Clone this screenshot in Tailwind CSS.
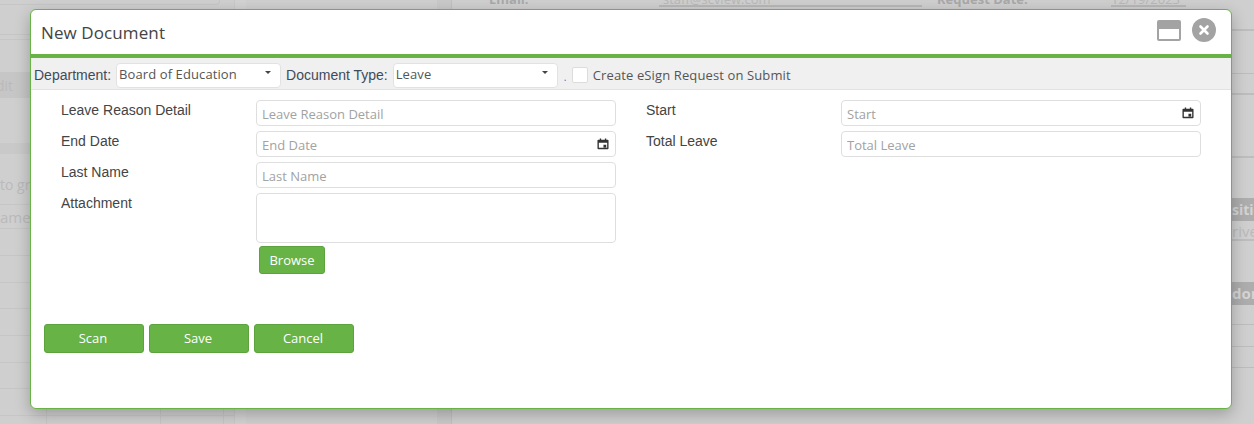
<!DOCTYPE html>
<html lang="en">
<head>
<meta charset="utf-8">
<title>New Document</title>
<script src="https://cdn.jsdelivr.net/npm/@tailwindcss/browser@4"></script>
</head>
<body class="bg-[#cfcfcf] font-['Open_Sans',sans-serif]">
<div class="relative w-[1254px] h-[424px] overflow-hidden">
  <!-- dimmed page behind the dialog -->
  <div class="flex h-full text-[#bababa]">
    <div class="w-[235px] shrink-0 flex flex-col text-[14px] border-r border-[#c8c8c8]">
      <div class="w-[220px] h-[5px] border-b border-r border-[#c6c6c6] rounded-br-[4px]"></div>
      <div class="h-[30px] border-b border-[#c6c6c6]"></div>
      <div class="h-[5px] border-b border-[#c6c6c6]"></div>
      <div class="mt-[32px] h-[26px] bg-[#c6c6c6] leading-[26px] overflow-hidden"><span class="block ml-[-4px] mt-[1px]">dit</span></div>
      <div class="mt-[45px] h-[11px] bg-[#c9c9c9]"></div>
      <div class="mt-[21px] h-[30px] border-b border-[#c6c6c6] leading-[20px] whitespace-nowrap">to gro</div>
      <div class="h-[24px] border-b border-[#c6c6c6] leading-[24px] text-[15px]">ame</div>
      <div class="h-[27px] border-b border-[#c6c6c6]"></div>
      <div class="h-[27px] border-b border-[#c6c6c6]"></div>
      <div class="h-[26px] border-b border-[#c6c6c6]"></div>
      <div class="h-[27px] border-b border-[#c6c6c6]"></div>
      <div class="h-[27px] border-b border-[#c6c6c6]"></div>
      <div class="h-[26px] border-b border-[#c6c6c6]"></div>
      <div class="h-[27px] flex border-b border-[#c6c6c6]">
        <div class="w-[47px] border-r border-[#c6c6c6]"></div>
        <div class="w-[114px] border-r border-[#c6c6c6]"></div>
        <div class="w-[63px] border-r border-[#c6c6c6]"></div>
      </div>
      <div class="flex-1 flex">
        <div class="w-[47px] border-r border-[#c6c6c6]"></div>
        <div class="w-[114px] border-r border-[#c6c6c6]"></div>
        <div class="w-[63px] border-r border-[#c6c6c6]"></div>
      </div>
    </div>
    <div class="flex-1 flex">
      <div class="w-[11px] bg-[#d2d2d2]"></div>
      <div class="w-[206px] flex justify-end border-r border-[#c0c0c0]">
        <div class="w-[14px] bg-[#c9c9c9]"></div>
      </div>
      <div class="flex pl-[37px] mt-[-8px] h-[15px] text-[13px] leading-[14px] text-[#a9a9a9] whitespace-nowrap">
        <span class="w-[170px] font-bold">Email:</span>
        <span class="w-[263px] h-[15px] border-b-2 border-[#b8b8b8] pl-[4px] mr-[15px] text-[#b8b8b8]">staff@scview.com</span>
        <span class="w-[174px] font-bold">Request Date:</span>
        <span class="w-[75px] h-[15px] border-b-2 border-[#b8b8b8] text-[#b8b8b8]">12/19/2023</span>
      </div>
    </div>
    <div class="w-[22px] shrink-0 flex flex-col text-[14px] font-bold whitespace-nowrap overflow-hidden">
      <div class="h-[31px] border-b-2 border-[#bdbdbd]"></div>
      <div class="h-[43px] border-b border-[#bdbdbd]"></div>
      <div class="h-[21px] border-b-2 border-[#bdbdbd]"></div>
      <div class="h-[63px] border-b-2 border-[#bdbdbd]"></div>
      <div class="mt-[40px] h-[23px] bg-[#adadad] text-[#d4d4d4] leading-[23px]">sitic</div>
      <div class="h-[20px] border-b-2 border-[#bdbdbd] font-normal text-[15px] text-[#bababa] leading-[20px]">rive</div>
      <div class="mt-[41px] h-[23px] bg-[#adadad] text-[#d4d4d4] leading-[23px] text-[15px]">dor</div>
      <div class="mt-[19px] h-px bg-[#bdbdbd]"></div>
      <div class="mt-[21px] h-px bg-[#bdbdbd]"></div>
      <div class="mt-[20px] h-px bg-[#bdbdbd]"></div>
    </div>
  </div>

  <!-- dialog -->
  <div class="absolute left-[30px] top-[9px] w-[1202px] h-[400px] bg-white border border-[#67b346] rounded-[6px] shadow-[0_5px_15px_rgba(0,0,0,0.25)] flex flex-col overflow-hidden">
    <div class="h-[44px] shrink-0 flex items-center justify-between pl-[10px] pr-[15px]">
      <span class="text-[17px] text-[#444] tracking-[0.1px] mt-[2px]">New Document</span>
      <div class="flex items-center gap-[11px] mb-[4px]">
        <svg width="24" height="21" viewBox="0 0 24 21" aria-hidden="true">
          <rect x="0" y="0" width="24" height="21" rx="2" fill="#a3a3a3"/>
          <rect x="2" y="9" width="20" height="10" fill="#fff"/>
        </svg>
        <svg width="24" height="24" viewBox="0 0 24 24" aria-hidden="true">
          <circle cx="12" cy="12" r="12" fill="#a3a3a3"/>
          <path d="M8.500 8.500 15.500 15.500M15.500 8.500 8.500 15.500" stroke="#fff" stroke-width="2.600" stroke-linecap="round"/>
        </svg>
      </div>
    </div>
    <div class="h-[4px] shrink-0 bg-[#67b346]"></div>

    <div class="h-[32px] shrink-0 bg-[#f0f0f0] border-b border-[#e2e2e2] flex items-center pl-[3px] pb-[1px] whitespace-nowrap">
      <span class="font-['Liberation_Sans',sans-serif] text-[14px] text-[#3f4a5a] mt-[4px] mr-[5px]">Department:</span>
      <div class="relative w-[165px] h-[25px]">
        <select class="appearance-none w-full h-full bg-white border border-[#e2e2e2] rounded-[4px] pl-[2px] text-[13px] tracking-[0.1px] text-[#555] outline-none pb-[2px]">
          <option>Board of Education</option>
        </select>
        <svg class="absolute right-[10px] top-[10px]" width="6" height="3" viewBox="0 0 6 3" aria-hidden="true"><path d="M0 0h6L3 3z" fill="#444"/></svg>
      </div>
      <span class="font-['Liberation_Sans',sans-serif] text-[14px] text-[#3f4a5a] mt-[4px] ml-[5px] mr-[5px]">Document Type:</span>
      <div class="relative w-[165px] h-[25px]">
        <select class="appearance-none w-full h-full bg-white border border-[#e2e2e2] rounded-[4px] pl-[2px] text-[13px] tracking-[0.1px] text-[#555] outline-none pb-[2px]">
          <option>Leave</option>
        </select>
        <svg class="absolute right-[10px] top-[10px]" width="6" height="3" viewBox="0 0 6 3" aria-hidden="true"><path d="M0 0h6L3 3z" fill="#444"/></svg>
      </div>
      <span class="text-[10px] text-[#3b6fd4] ml-[6px] mt-[8px] w-[8px]">.</span>
      <span class="w-[16px] h-[16px] bg-white border border-[#dcdcdc] rounded-[2px] mr-[5px] mt-[4px]"></span>
      <span class="text-[13px] text-[#555] tracking-[0.12px] mt-[5px]">Create eSign Request on Submit</span>
    </div>

    <div class="flex-1 flex flex-col pl-[13px]">
      <div class="flex pt-[10px] pl-[17px]">
        <div class="w-[585px] shrink-0 flex flex-col gap-[5px]">
          <div class="flex h-[26px]">
            <label class="w-[195px] font-['Liberation_Sans',sans-serif] text-[14px] text-[#444] leading-[20px]">Leave Reason Detail</label>
            <input placeholder="Leave Reason Detail" class="w-[360px] h-[26px] border border-[#dedede] rounded-[4px] px-[5px] pt-[2px] text-[13px] placeholder:text-[#a2a2a2] outline-none">
          </div>
          <div class="flex h-[26px]">
            <label class="w-[195px] font-['Liberation_Sans',sans-serif] text-[14px] text-[#444] leading-[20px]">End Date</label>
            <div class="relative w-[360px] h-[26px]">
              <input placeholder="End Date" class="w-full h-full border border-[#dedede] rounded-[4px] px-[5px] pt-[2px] text-[13px] placeholder:text-[#a2a2a2] outline-none">
              <svg class="absolute right-[7px] top-[7px]" width="12" height="12" viewBox="0 0 13 14" preserveAspectRatio="none" aria-hidden="true"><path d="M1.500 2H3V.500h1.500V2h4V.500H10V2h1.500A1 1 0 0 1 12.500 3v9a1 1 0 0 1-1 1h-10a1 1 0 0 1-1-1V3a1 1 0 0 1 1-1zM2 5.500V11.500h9V5.500zM7 8h3v3H7z" fill="#333" fill-rule="evenodd"/></svg>
            </div>
          </div>
          <div class="flex h-[26px]">
            <label class="w-[195px] font-['Liberation_Sans',sans-serif] text-[14px] text-[#444] leading-[20px]">Last Name</label>
            <input placeholder="Last Name" class="w-[360px] h-[26px] border border-[#dedede] rounded-[4px] px-[5px] pt-[2px] text-[13px] placeholder:text-[#a2a2a2] outline-none">
          </div>
          <div class="flex">
            <label class="w-[195px] font-['Liberation_Sans',sans-serif] text-[14px] text-[#444] leading-[20px]">Attachment</label>
            <div class="flex flex-col items-start">
              <textarea class="block w-[360px] h-[50px] border border-[#dedede] rounded-[4px] outline-none resize-none"></textarea>
              <button class="mt-[3px] ml-[3px] w-[66px] h-[28px] pt-[2px] bg-[#67b346] border border-[#5ca33e] rounded-[3px] text-white text-[13px]">Browse</button>
            </div>
          </div>
        </div>
        <div class="flex flex-col gap-[5px]">
          <div class="flex h-[26px]">
            <label class="w-[195px] font-['Liberation_Sans',sans-serif] text-[14px] text-[#444] leading-[20px]">Start</label>
            <div class="relative w-[360px] h-[26px]">
              <input placeholder="Start" class="w-full h-full border border-[#dedede] rounded-[4px] px-[5px] pt-[2px] text-[13px] placeholder:text-[#a2a2a2] outline-none">
              <svg class="absolute right-[7px] top-[7px]" width="12" height="12" viewBox="0 0 13 14" preserveAspectRatio="none" aria-hidden="true"><path d="M1.500 2H3V.500h1.500V2h4V.500H10V2h1.500A1 1 0 0 1 12.500 3v9a1 1 0 0 1-1 1h-10a1 1 0 0 1-1-1V3a1 1 0 0 1 1-1zM2 5.500V11.500h9V5.500zM7 8h3v3H7z" fill="#333" fill-rule="evenodd"/></svg>
            </div>
          </div>
          <div class="flex h-[26px]">
            <label class="w-[195px] font-['Liberation_Sans',sans-serif] text-[14px] text-[#444] leading-[20px]">Total Leave</label>
            <input placeholder="Total Leave" class="w-[360px] h-[26px] border border-[#dedede] rounded-[4px] px-[5px] pt-[2px] text-[13px] placeholder:text-[#a2a2a2] outline-none">
          </div>
        </div>
      </div>
      <div class="flex gap-[5px] mt-[50px]">
        <button class="w-[100px] h-[29px] bg-[#67b346] border border-[#5ca33e] rounded-[3px] text-white text-[13px] pr-[2px]">Scan</button>
        <button class="w-[100px] h-[29px] bg-[#67b346] border border-[#5ca33e] rounded-[3px] text-white text-[13px] pr-[2px]">Save</button>
        <button class="w-[100px] h-[29px] bg-[#67b346] border border-[#5ca33e] rounded-[3px] text-white text-[13px] pr-[2px]">Cancel</button>
      </div>
    </div>
  </div>
</div>
</body>
</html>
